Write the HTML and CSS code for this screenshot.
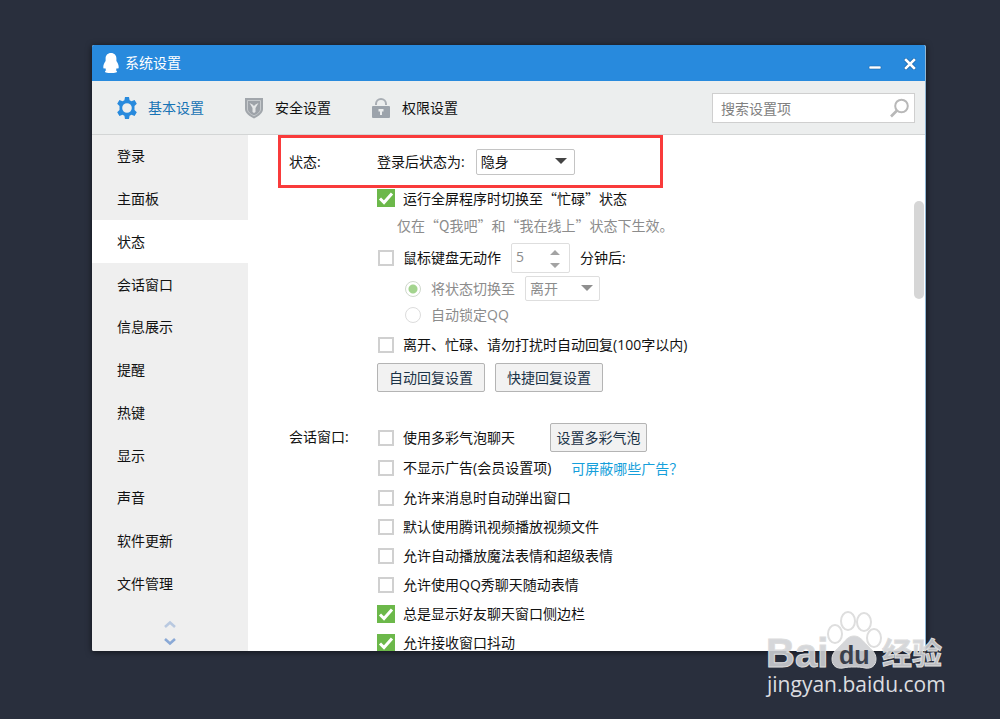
FILE: index.html
```html
<!DOCTYPE html>
<html lang="zh-CN">
<head>
    <meta charset="UTF-8">
    <meta name="viewport" content="width=device-width, initial-scale=1.0">
    <title>系统设置</title>
    <link rel="stylesheet" href="styles.css">
</head>
<body>
    <div class="window">
        <header class="titlebar">
            <svg class="penguin" viewBox="0 0 16 20" width="16" height="20">
                <path fill="#fff" d="M8 0C4.600 0 2.600 2.400 2.600 5.500V8C1.200 9.800.3 12 .3 14c0 1.600.8 2 1.900 1 .2.900.5 1.600 1 2.200-.8.4-1.200.8-1.200 1.400C2 19.600 3.600 20 5.200 20h5.600c1.600 0 3.200-.4 3.200-1.400 0-.6-.4-1-1.200-1.400.5-.6.8-1.300 1-2.200 1.100 1 1.900.6 1.900-1 0-2-.9-4.200-2.300-6V5.500C13.400 2.400 11.400 0 8 0z"/>
            </svg>
            <h1>系统设置</h1>
            <button type="button" class="win-btn" aria-label="最小化">
                <svg viewBox="0 0 14 14" width="14" height="14">
                    <rect x="1" y="10" width="12" height="3" rx="1" fill="#fff" stroke="#1b69ad" stroke-width=".6"/>
                </svg>
            </button>
            <button type="button" class="win-btn" aria-label="关闭">
                <svg viewBox="0 0 14 14" width="14" height="14" fill="none">
                    <path d="M3 4l8 8M11 4l-8 8" stroke="#1b69ad" stroke-width="4" stroke-linecap="round"/>
                    <path d="M3 4l8 8M11 4l-8 8" stroke="#fff" stroke-width="2.600" stroke-linecap="square"/>
                </svg>
            </button>
        </header>

        <div class="toolbar">
            <nav class="tabs">
                <a href="#" class="tab active">
                    <svg viewBox="0 0 20 22" width="20" height="22">
                        <path fill="#288add" fill-rule="evenodd" d="M8 0h4l.6 3.200 1.900 1.100L17.600 3l2.200 3.800-2.300 2.300v3.800l2.300 2.300-2.200 3.800-3.100-1.300-1.900 1.100L12 22H8l-.6-3.200-1.900-1.100L2.400 19 .2 15.200l2.300-2.300V9.100L.2 6.800 2.400 3l3.100 1.300 1.900-1.100zM10 6.200a4.800 4.800 0 1 0 0 9.600 4.800 4.800 0 0 0 0-9.600z"/>
                    </svg>
                    基本设置
                </a>
                <a href="#" class="tab">
                    <svg viewBox="0 0 20 22" width="20" height="22">
                        <path fill="#a1a6ab" d="M1 1h18v11c0 4-4 7-9 9.500C5 19 1 16 1 12z"/>
                        <path fill="#9da2a8" stroke="#c6cacd" d="M3.500 3.500h13V12c0 3-3 5-6.500 6.900C6.500 17 3.500 15 3.500 12z"/>
                        <path fill="#e4e6e7" d="M5.500 6l3 1.500L10 9l1.500-1.500 3-1.500-3 5v4L10 16l-1.500-1v-4z"/>
                    </svg>
                    安全设置
                </a>
                <a href="#" class="tab">
                    <svg viewBox="0 0 20 22" width="20" height="22">
                        <path fill="none" stroke="#a9aeb4" stroke-width="2" d="M5 8V7a5 5 0 0 1 10 0v1"/>
                        <rect x="1" y="9" width="18" height="12" rx="1" fill="#9ca3ab"/>
                        <path fill="#eceeee" d="M7.500 12h5v2.500H11V18H9v-3.500H7.500z"/>
                    </svg>
                    权限设置
                </a>
            </nav>
            <div class="search">
                <input type="text" placeholder="搜索设置项" aria-label="搜索设置项">
                <svg viewBox="0 0 20 20" width="20" height="20" fill="none" stroke="#b8b8b8">
                    <circle cx="12.500" cy="8" r="6.300" stroke-width="2"/>
                    <path d="M8 12.500L2 18.500" stroke-width="2.600"/>
                </svg>
            </div>
        </div>

        <div class="main">
            <nav class="sidebar">
                <a href="#">登录</a>
                <a href="#">主面板</a>
                <a href="#" class="active">状态</a>
                <a href="#">会话窗口</a>
                <a href="#">信息展示</a>
                <a href="#">提醒</a>
                <a href="#">热键</a>
                <a href="#">显示</a>
                <a href="#">声音</a>
                <a href="#">软件更新</a>
                <a href="#">文件管理</a>
                <div class="arrows">
                    <svg viewBox="0 0 14 26" width="14" height="26" fill="none" stroke-width="2.600">
                        <path d="M2 7l5-4.500L12 7" stroke="#b9c9e0"/>
                        <path d="M2 19l5 4.500 5-4.500" stroke="#8aa9d6"/>
                    </svg>
                </div>
            </nav>

            <div class="content">
                <section class="group">
                    <h2 class="first">状态:</h2>
                    <div class="fields">
                        <div class="row row-status">
                            <label for="loginStatus">登录后状态为:</label>
                            <span class="select">
                                <select id="loginStatus">
                                    <option>隐身</option>
                                    <option>在线</option>
                                </select>
                            </span>
                        </div>
                        <div class="row row-full">
                            <label class="check quoted"><input type="checkbox" checked>运行全屏程序时切换至“忙碌”状态</label>
                        </div>
                        <p class="hint quoted">仅在“Q我吧”和“我在线上”状态下生效。</p>
                        <div class="row row-idle">
                            <label class="check"><input type="checkbox">鼠标键盘无动作</label>
                            <span class="spinner">
                                <input type="number" id="idle" value="5" disabled>
                                <svg viewBox="0 0 10 18" width="10" height="18" fill="#a3a3a3">
                                    <path d="M0 5l5-5 5 5zM0 13l5 5 5-5z"/>
                                </svg>
                            </span>
                            <label for="idle">分钟后:</label>
                        </div>
                        <div class="row row-switch disabled">
                            <label class="check"><input type="radio" name="idleAction" checked disabled>将状态切换至</label>
                            <span class="select small">
                                <select aria-label="状态" disabled>
                                    <option>离开</option>
                                </select>
                            </span>
                        </div>
                        <div class="row row-lock disabled">
                            <label class="check"><input type="radio" name="idleAction" disabled>自动锁定QQ</label>
                        </div>
                        <div class="row row-reply">
                            <label class="check"><input type="checkbox">离开、忙碌、请勿打扰时自动回复(100字以内)</label>
                        </div>
                        <div class="row buttons">
                            <button type="button" class="btn">自动回复设置</button>
                            <button type="button" class="btn">快捷回复设置</button>
                        </div>
                    </div>
                    <div class="highlight"></div>
                </section>

                <section class="group chat">
                    <h2>会话窗口:</h2>
                    <div class="fields">
                        <div class="row">
                            <label class="check"><input type="checkbox">使用多彩气泡聊天</label>
                            <button type="button" class="btn bubble">设置多彩气泡</button>
                        </div>
                        <div class="row row-ads">
                            <label class="check"><input type="checkbox">不显示广告(会员设置项)</label>
                            <a href="#" class="link">可屏蔽哪些广告？</a>
                        </div>
                        <div class="row"><label class="check"><input type="checkbox">允许来消息时自动弹出窗口</label></div>
                        <div class="row"><label class="check"><input type="checkbox">默认使用腾讯视频播放视频文件</label></div>
                        <div class="row"><label class="check"><input type="checkbox">允许自动播放魔法表情和超级表情</label></div>
                        <div class="row"><label class="check"><input type="checkbox">允许使用QQ秀聊天随动表情</label></div>
                        <div class="row"><label class="check"><input type="checkbox" checked>总是显示好友聊天窗口侧边栏</label></div>
                        <div class="row"><label class="check"><input type="checkbox" checked>允许接收窗口抖动</label></div>
                    </div>
                </section>
                <div class="scroll-thumb"></div>
            </div>
        </div>
    </div>

    <svg class="watermark" viewBox="0 0 185 92" width="185" height="92">
        <g class="toes">
            <ellipse cx="70" cy="26" rx="7" ry="9"/>
            <ellipse cx="83" cy="13" rx="7" ry="9"/>
            <ellipse cx="99" cy="14" rx="7" ry="9"/>
            <ellipse cx="109" cy="30" rx="7" ry="9"/>
        </g>
        <text class="logo" x="1" y="59">Bai</text>
        <path class="pad" d="M89 28c6 0 9 5 13 9 5 5 9 8 9 14 0 7-5 10-11 9-4-1-7-1-11-1s-7 0-11 1c-6 1-11-2-11-9 0-6 4-9 9-14 4-4 7-9 13-9z"/>
        <text class="du" x="74" y="56">du</text>
        <text class="logo-cn" x="117" y="56">经验</text>
        <text class="site" x="2" y="84">jingyan.baidu.com</text>
    </svg>
</body>
</html>
```
FILE: styles.css
```css
* {
    box-sizing: border-box;
}

body {
    margin: 0;
    height: 100vh;
    padding: 45px 74px 68px 92px;
    background-color: #292f3d;
    font-family: "Open Sans", "Noto Sans CJK SC", sans-serif;
    font-size: 14px;
    line-height: 20px;
    color: #111;
    position: relative;
    overflow: hidden;
}

h1, h2, p {
    margin: 0;
    font-size: 14px;
    font-weight: normal;
}

a {
    color: inherit;
    text-decoration: none;
}

button, input, select {
    font: inherit;
    color: inherit;
    margin: 0;
}

.window {
    height: 100%;
    display: flex;
    flex-direction: column;
    border-right: 1px solid #8fb6d3;
    border-radius: 2px;
    overflow: hidden;
    background-color: #fff;
    box-shadow: 0 1px 6px rgba(0, 0, 0, 0.6);
}

/* title bar */
.titlebar {
    height: 36px;
    flex: none;
    display: flex;
    align-items: center;
    padding: 0 8px 0 11px;
    background-color: #288add;
    color: #fff;
}

.titlebar h1 {
    flex: 1;
    margin-left: 6px;
}

.win-btn {
    width: 14px;
    height: 14px;
    padding: 0;
    border: none;
    background: none;
    margin-left: 21px;
}

.win-btn svg {
    display: block;
}

/* toolbar */
.toolbar {
    height: 54px;
    flex: none;
    display: flex;
    align-items: center;
    justify-content: space-between;
    padding: 1px 10px 0 25px;
    background-color: #eceeee;
    border-bottom: 1px solid #d3d5d5;
}

.tabs {
    display: flex;
    gap: 40px;
}

.tab {
    display: flex;
    align-items: center;
    gap: 11px;
}

.tab.active {
    color: #1874b5;
}

.search {
    position: relative;
}

.search input {
    display: block;
    width: 203px;
    height: 30px;
    padding: 0 32px 0 8px;
    border: 1px solid #cfcfcf;
    background-color: #fff;
}

.search input::placeholder {
    color: #808080;
    opacity: 1;
}

.search svg {
    position: absolute;
    right: 6px;
    top: 5px;
}

/* body */
.main {
    flex: 1;
    min-height: 0;
    display: flex;
}

.sidebar {
    width: 156px;
    flex: none;
    display: flex;
    flex-direction: column;
    background-color: #efefef;
}

.sidebar a {
    flex: 1;
    display: flex;
    align-items: center;
    padding-left: 25px;
}

.sidebar a.active {
    background-color: #fff;
}

.arrows {
    height: 46px;
    padding: 15px 0 0 71px;
}

.content {
    flex: 1;
    position: relative;
    overflow: hidden;
    padding-left: 41px;
}

.group {
    display: flex;
    position: relative;
}

.group h2 {
    width: 88px;
    flex: none;
    line-height: 28px;
}

.group h2.first {
    line-height: 54px;
}

.chat {
    margin-top: 31px;
}

.row {
    display: flex;
    align-items: center;
    height: 29px;
}

.row-status {
    height: 54px;
    gap: 11px;
}

.row-full {
    height: 18px;
}

.hint {
    line-height: 36px;
    padding-left: 20px;
    color: #8c8c8c;
}

.quoted {
    font-family: "Noto Sans CJK SC", sans-serif;
}

.row-idle {
    height: 30px;
    gap: 10px;
}

.row-switch {
    height: 31px;
    gap: 10px;
    padding-left: 28px;
}

.row-lock {
    height: 22px;
    padding-left: 28px;
}

.row-reply {
    height: 37px;
}

.row-ads {
    height: 31px;
}

.disabled {
    color: #8c8c8c;
}

.check {
    display: flex;
    align-items: center;
    gap: 8px;
}

.check input {
    appearance: none;
    width: 16px;
    height: 16px;
    margin: 0 1px;
    border: 2px solid #d0d0d0;
    background-color: #fff;
}

.check input[type="checkbox"]:checked {
    width: 18px;
    height: 18px;
    margin: 0;
    border: none;
    background: #6cb84a url("data:image/svg+xml,%3Csvg xmlns='http://www.w3.org/2000/svg' viewBox='0 0 18 18'%3E%3Cpath d='M3 9.500l4 4L15 4.500' fill='none' stroke='%23fff' stroke-width='3'/%3E%3C/svg%3E");
}

.check input[type="radio"] {
    border: 1px solid #dcdcdc;
    border-radius: 50%;
    margin: 0;
    margin-right: 2px;
}

.check input[type="radio"]:checked {
    background-image: radial-gradient(circle, #a3d48e 4px, transparent 5px);
    border-color: #cfd8cc;
}

.select {
    position: relative;
    display: flex;
}

.select select {
    appearance: none;
    width: 99px;
    height: 26px;
    padding: 0 4px;
    border: 1px solid #c4c4c4;
    border-radius: 2px;
    background-color: #fff;
}

.select.small select {
    width: 75px;
    height: 25px;
    border-color: #dedede;
    color: #8c8c8c;
    opacity: 1;
}

.select::after {
    content: "";
    position: absolute;
    right: 8px;
    top: 9px;
    border: 6px solid transparent;
    border-top-color: #444;
    border-bottom: none;
    pointer-events: none;
}

.select.small::after {
    border-top-color: #8f8f8f;
    right: 7px;
}

.spinner {
    position: relative;
}

.spinner input {
    appearance: textfield;
    display: block;
    width: 59px;
    height: 30px;
    padding: 0 4px 4px;
    border: 1px solid #dedede;
    border-radius: 2px;
    background-color: #fff;
    color: #8c8c8c;
}

.spinner svg {
    position: absolute;
    right: 10px;
    top: 7px;
}

.buttons {
    gap: 10px;
}

.btn {
    height: 29px;
    width: 108px;
    padding: 0;
    border: 1px solid #b4b4b4;
    border-radius: 2px;
    background-color: #f2f2f2;
    color: #1b3347;
}

.btn.bubble {
    width: 97px;
    margin-left: 35px;
}

.link {
    color: #159fdb;
    margin-left: 20px;
    font-family: "Noto Sans CJK SC", sans-serif;
}

/* red frame over the first row */
.highlight {
    position: absolute;
    left: -11px;
    top: 0;
    width: 385px;
    height: 53px;
    border: 3px solid #f93b3b;
    pointer-events: none;
}

.scroll-thumb {
    position: absolute;
    right: 1px;
    top: 66px;
    width: 10px;
    height: 98px;
    border-radius: 5px;
    background-color: #d6d6d6;
}

/* corner watermark */
.watermark {
    position: absolute;
    right: 50px;
    bottom: 19px;
}

.toes ellipse {
    fill: #fff;
    fill-opacity: 0.5;
    stroke: #dedede;
    stroke-width: 2;
}

.logo, .logo-cn, .pad {
    fill: #d0d2d5;
    fill-opacity: 0.9;
    stroke: #dcdcdc;
    stroke-width: 1;
}

.logo {
    font: bold 40px "Liberation Sans", sans-serif;
}

.logo-cn {
    font: bold 30px "Noto Sans CJK SC", sans-serif;
}

.du {
    font: bold 25px "Liberation Sans", sans-serif;
    fill: #3a404c;
}

.site {
    font: 21px "Open Sans", sans-serif;
    fill: #dcdde0;
}
```
